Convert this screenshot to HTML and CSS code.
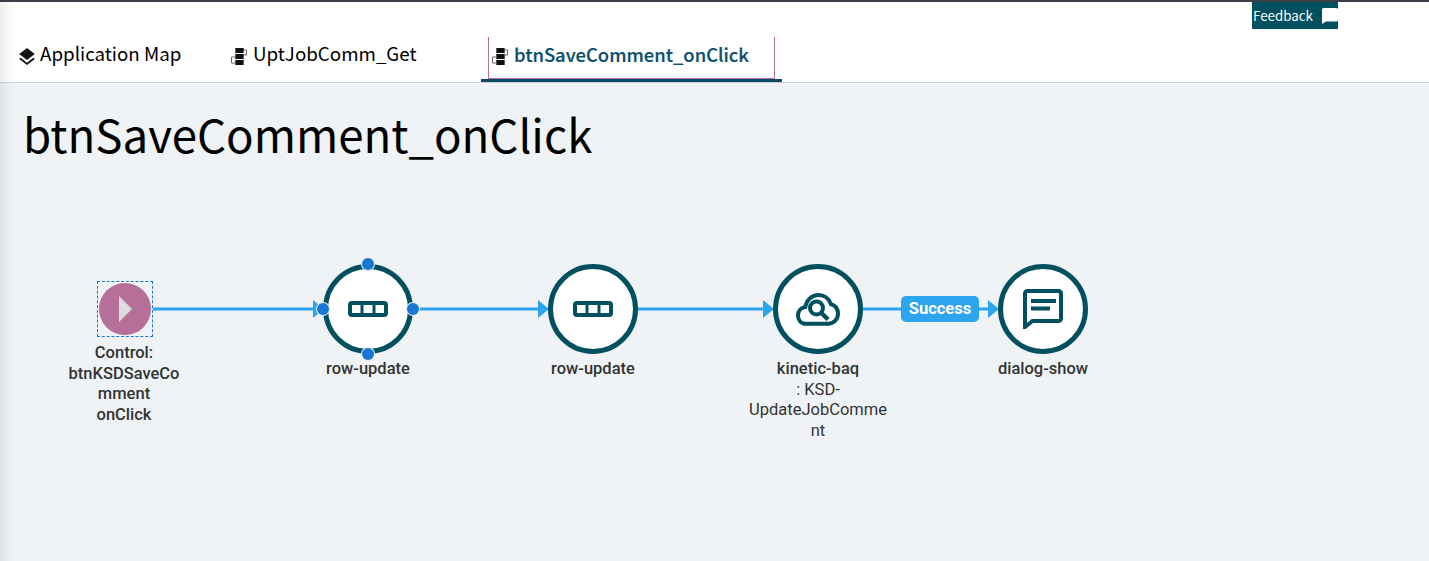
FILE: index.html
```html
<!DOCTYPE html>
<html lang="en">
<head>
    <meta charset="UTF-8">
    <title>btnSaveComment_onClick</title>
    <link rel="stylesheet" href="styles.css">
</head>
<body>
    <div class="side-shadow"></div>
    <header class="top">
        <div class="feedback-row">
            <a class="feedback">
                <span>Feedback</span>
                <svg width="16" height="16" viewBox="0 0 16 16"><path d="M1.500 0h13A1.500 1.500 0 0 1 16 1.500v10.500a1.500 1.500 0 0 1-1.500 1.500H4L0 16V1.500A1.500 1.500 0 0 1 1.500 0z" fill="#fff"/></svg>
            </a>
        </div>
        <nav class="tabs">
            <a class="tab tab-map">
                <svg class="tab-icon" width="16" height="17" viewBox="0 0 16 17"><path d="M8 0 15.800 6 8 12 .2 6z" fill="#111"/><path d="M1.700 9.700.2 10.900 8 17l7.800-6.100-1.500-1.200L8 14.700z" fill="#111"/></svg>
                Application Map
            </a>
            <a class="tab tab-func">
                <svg class="tab-icon" width="16" height="17" viewBox="0 0 16 17"><use href="#flow-icon"/></svg>
                UptJobComm_Get
            </a>
            <a class="tab tab-active">
                <span class="tab-inner">
                    <svg class="tab-icon" width="16" height="17" viewBox="0 0 16 17"><use href="#flow-icon"/></svg>
                    btnSaveComment_onClick
                </span>
            </a>
        </nav>
    </header>

    <main class="content">
        <h1 class="title">btnSaveComment_onClick</h1>

        <div class="canvas">
            <svg class="edges" width="1429" height="479" viewBox="0 0 1429 479">
                <g stroke="#2ca5ee" stroke-width="3" fill="none">
                    <path d="M153 226H316"/>
                    <path d="M413 226H541"/>
                    <path d="M638 226H766"/>
                    <path d="M863 226H991"/>
                </g>
                <g fill="#2ca5ee">
                    <path d="M313 217l11 9-11 9z"/>
                    <path d="M538 217l11 9-11 9z"/>
                    <path d="M763 217l11 9-11 9z"/>
                    <path d="M988 217l11 9-11 9z"/>
                </g>
            </svg>

            <div class="start-box"><div class="start">
                <svg width="13" height="26" viewBox="0 0 13 26"><path d="M0 0l13 13L0 26z" fill="#dcdcdf"/></svg>
            </div></div>
            <div class="label label-start"><b>Control:<br>btnKSDSaveCo<br>mment<br>onClick</b></div>

            <div class="node node-1">
                <svg width="40" height="16" viewBox="0 0 40 16"><use href="#row-icon"/></svg>
                <i class="port port-top"></i><i class="port port-left"></i><i class="port port-right"></i><i class="port port-bottom"></i>
            </div>
            <div class="label label-1"><b>row-update</b></div>

            <div class="node node-2">
                <svg width="40" height="16" viewBox="0 0 40 16"><use href="#row-icon"/></svg>
            </div>
            <div class="label label-2"><b>row-update</b></div>

            <div class="node node-3">
                <svg width="44" height="33" viewBox="0 0 44 33">
                    <path d="M10 30.800C5 30.800 2 27 2 22.500c0-4.300 3-7.800 7.200-8.400C10.500 7 15.800 2 22.500 2c5.800 0 10.800 3.700 12.500 9.200 4.300.8 7 5 7 9.300 0 6-4.500 10.300-10 10.300z" fill="none" stroke="#00505f" stroke-width="4"/>
                    <circle cx="20.500" cy="15" r="6.500" fill="none" stroke="#00505f" stroke-width="4"/>
                    <path d="M25.500 20l6.500 6.500" stroke="#00505f" stroke-width="4.500" fill="none"/>
                </svg>
            </div>
            <div class="label label-3"><b>kinetic-baq</b><br>: KSD-<br>UpdateJobComme<br>nt</div>

            <div class="node node-4">
                <svg width="40" height="40" viewBox="0 0 40 40">
                    <path d="M4.500 2h31A2.500 2.500 0 0 1 38 4.500v25a2.500 2.500 0 0 1-2.500 2.500H9.500L2 38V4.500A2.500 2.500 0 0 1 4.500 2z" fill="none" stroke="#00505f" stroke-width="4"/>
                    <path d="M8 12h25M8 19.500h19" stroke="#00505f" stroke-width="4"/>
                </svg>
            </div>
            <div class="label label-4"><b>dialog-show</b></div>

            <div class="edge-tag">Success</div>
        </div>
    </main>

    <svg width="0" height="0" class="defs">
        <defs>
            <g id="flow-icon">
                <rect x="4.300" y="0" width="8.400" height="5" fill="#111"/>
                <rect x="4.300" y="6" width="8.400" height="5" fill="#111"/>
                <rect x="4.300" y="12" width="8.400" height="5" fill="#111"/>
                <path d="M13 2h2.500v5H13M4 9H.5v6H4" fill="none" stroke="#666" stroke-width="1"/>
            </g>
            <g id="row-icon">
                <rect x="2" y="2" width="36" height="12" rx="2" fill="#fff" stroke="#00505f" stroke-width="4"/>
                <path d="M14 2v12M26 2v12" stroke="#00505f" stroke-width="3"/>
            </g>
        </defs>
    </svg>
</body>
</html>
```

FILE: styles.css
```css
html, body {
    margin: 0;
    height: 100%;
    overflow: hidden;
}
body {
    display: flex;
    flex-direction: column;
    background-color: #eff3f6;
    border-top: 2px solid #3c3e48;
    box-sizing: border-box;
    font-family: "Noto Sans CJK SC", sans-serif;
    color: #000;
}
.defs {
    position: absolute;
}
.side-shadow {
    position: absolute;
    top: 0;
    left: 0;
    bottom: 0;
    width: 14px;
    background: linear-gradient(to right, rgba(0, 0, 0, 0.07), rgba(0, 0, 0, 0));
    z-index: 5;
}
.top {
    height: 80px;
    background-color: #fff;
    border-bottom: 1px solid #cfd1d3;
    display: flex;
    flex-direction: column;
}
.feedback-row {
    display: flex;
    justify-content: flex-end;
    padding-right: 91px;
}
.feedback {
    width: 86px;
    height: 27px;
    background-color: #00505f;
    color: #fff;
    font-size: 13.330px;
    display: flex;
    align-items: center;
    justify-content: space-between;
    padding-left: 1px;
    box-sizing: border-box;
}
.tabs {
    display: flex;
    height: 53px;
    font-size: 18.750px;
}
.tab {
    display: flex;
    align-items: center;
    gap: 5px;
    height: 46px;
}
.tab-icon {
    margin-top: 9px;
}
.tab-map {
    margin-left: 19px;
    width: 212px;
}
.tab-func {
    width: 250px;
    gap: 6px;
}
.tab-active {
    width: 301px;
    height: 45px;
    margin-top: 8px;
    box-sizing: border-box;
    border-bottom: 3px solid #0b4a6b;
    color: #0b4f6c;
    font-size: 18.400px;
    font-weight: 500;
    -webkit-text-stroke: 0.2px #0b4f6c;
    padding: 0 7px;
}
.tab-inner {
    flex: 1;
    height: 100%;
    display: flex;
    align-items: center;
    gap: 6px;
    padding-left: 3px;
    padding-bottom: 8px;
    border-left: 1px solid #b56f99;
    border-right: 1px solid #b56f99;
    border-bottom: 1px solid #b56f99;
    box-sizing: border-box;
}
.tab-inner .tab-icon {
    margin-top: 6px;
}
.content {
    flex: 1;
    position: relative;
}
.title {
    margin: 0;
    padding: 15px 0 0 23px;
    font-size: 45.600px;
    font-weight: 400;
    line-height: 70px;
    color: #000;
}
.canvas {
    position: absolute;
    top: 0;
    left: 0;
    right: 0;
    bottom: 0;
    font-family: Roboto, sans-serif;
    font-size: 16.500px;
    line-height: 20.500px;
    color: #333;
}
.edges {
    position: absolute;
    top: 0;
    left: 0;
}
.node {
    position: absolute;
    top: 181px;
    width: 80px;
    height: 80px;
    border: 5px solid #00505f;
    border-radius: 50%;
    background-color: #fff;
    display: flex;
    align-items: center;
    justify-content: center;
}
.node-1 { left: 323px; }
.node-2 { left: 548px; }
.node-3 { left: 773px; }
.node-4 { left: 998px; }
.start-box {
    position: absolute;
    left: 97px;
    top: 198px;
    width: 54px;
    height: 54px;
    border: 1px dashed #1976d2;
}
.start {
    width: 52px;
    height: 52px;
    margin: 1px;
    border-radius: 50%;
    background-color: #b56f99;
    display: flex;
    align-items: center;
    justify-content: center;
}
.port {
    position: absolute;
    width: 12px;
    height: 12px;
    border-radius: 50%;
    background-color: #1976d2;
    box-shadow: 0 0 0 1px #e8eef4;
}
.port-top { top: -11px; left: 34px; }
.port-bottom { bottom: -11px; left: 34px; }
.port-left { left: -11px; top: 34px; }
.port-right { right: -11px; top: 34px; }
.label {
    position: absolute;
    width: 120px;
    text-align: center;
    word-break: break-all;
}
.label b {
    font-weight: 500;
}
.label-start { left: 64px; top: 260px; }
.label-1 { left: 308px; top: 276px; }
.label-2 { left: 533px; top: 276px; }
.label-3 { left: 748px; top: 276px; width: 140px; }
.label-4 { left: 983px; top: 276px; }
.edge-tag {
    position: absolute;
    left: 901px;
    top: 213px;
    width: 78px;
    height: 26px;
    border-radius: 5px;
    background-color: #2ca5ee;
    color: #fff;
    font-weight: 700;
    font-size: 16.500px;
    line-height: 26px;
    text-align: center;
}
```
